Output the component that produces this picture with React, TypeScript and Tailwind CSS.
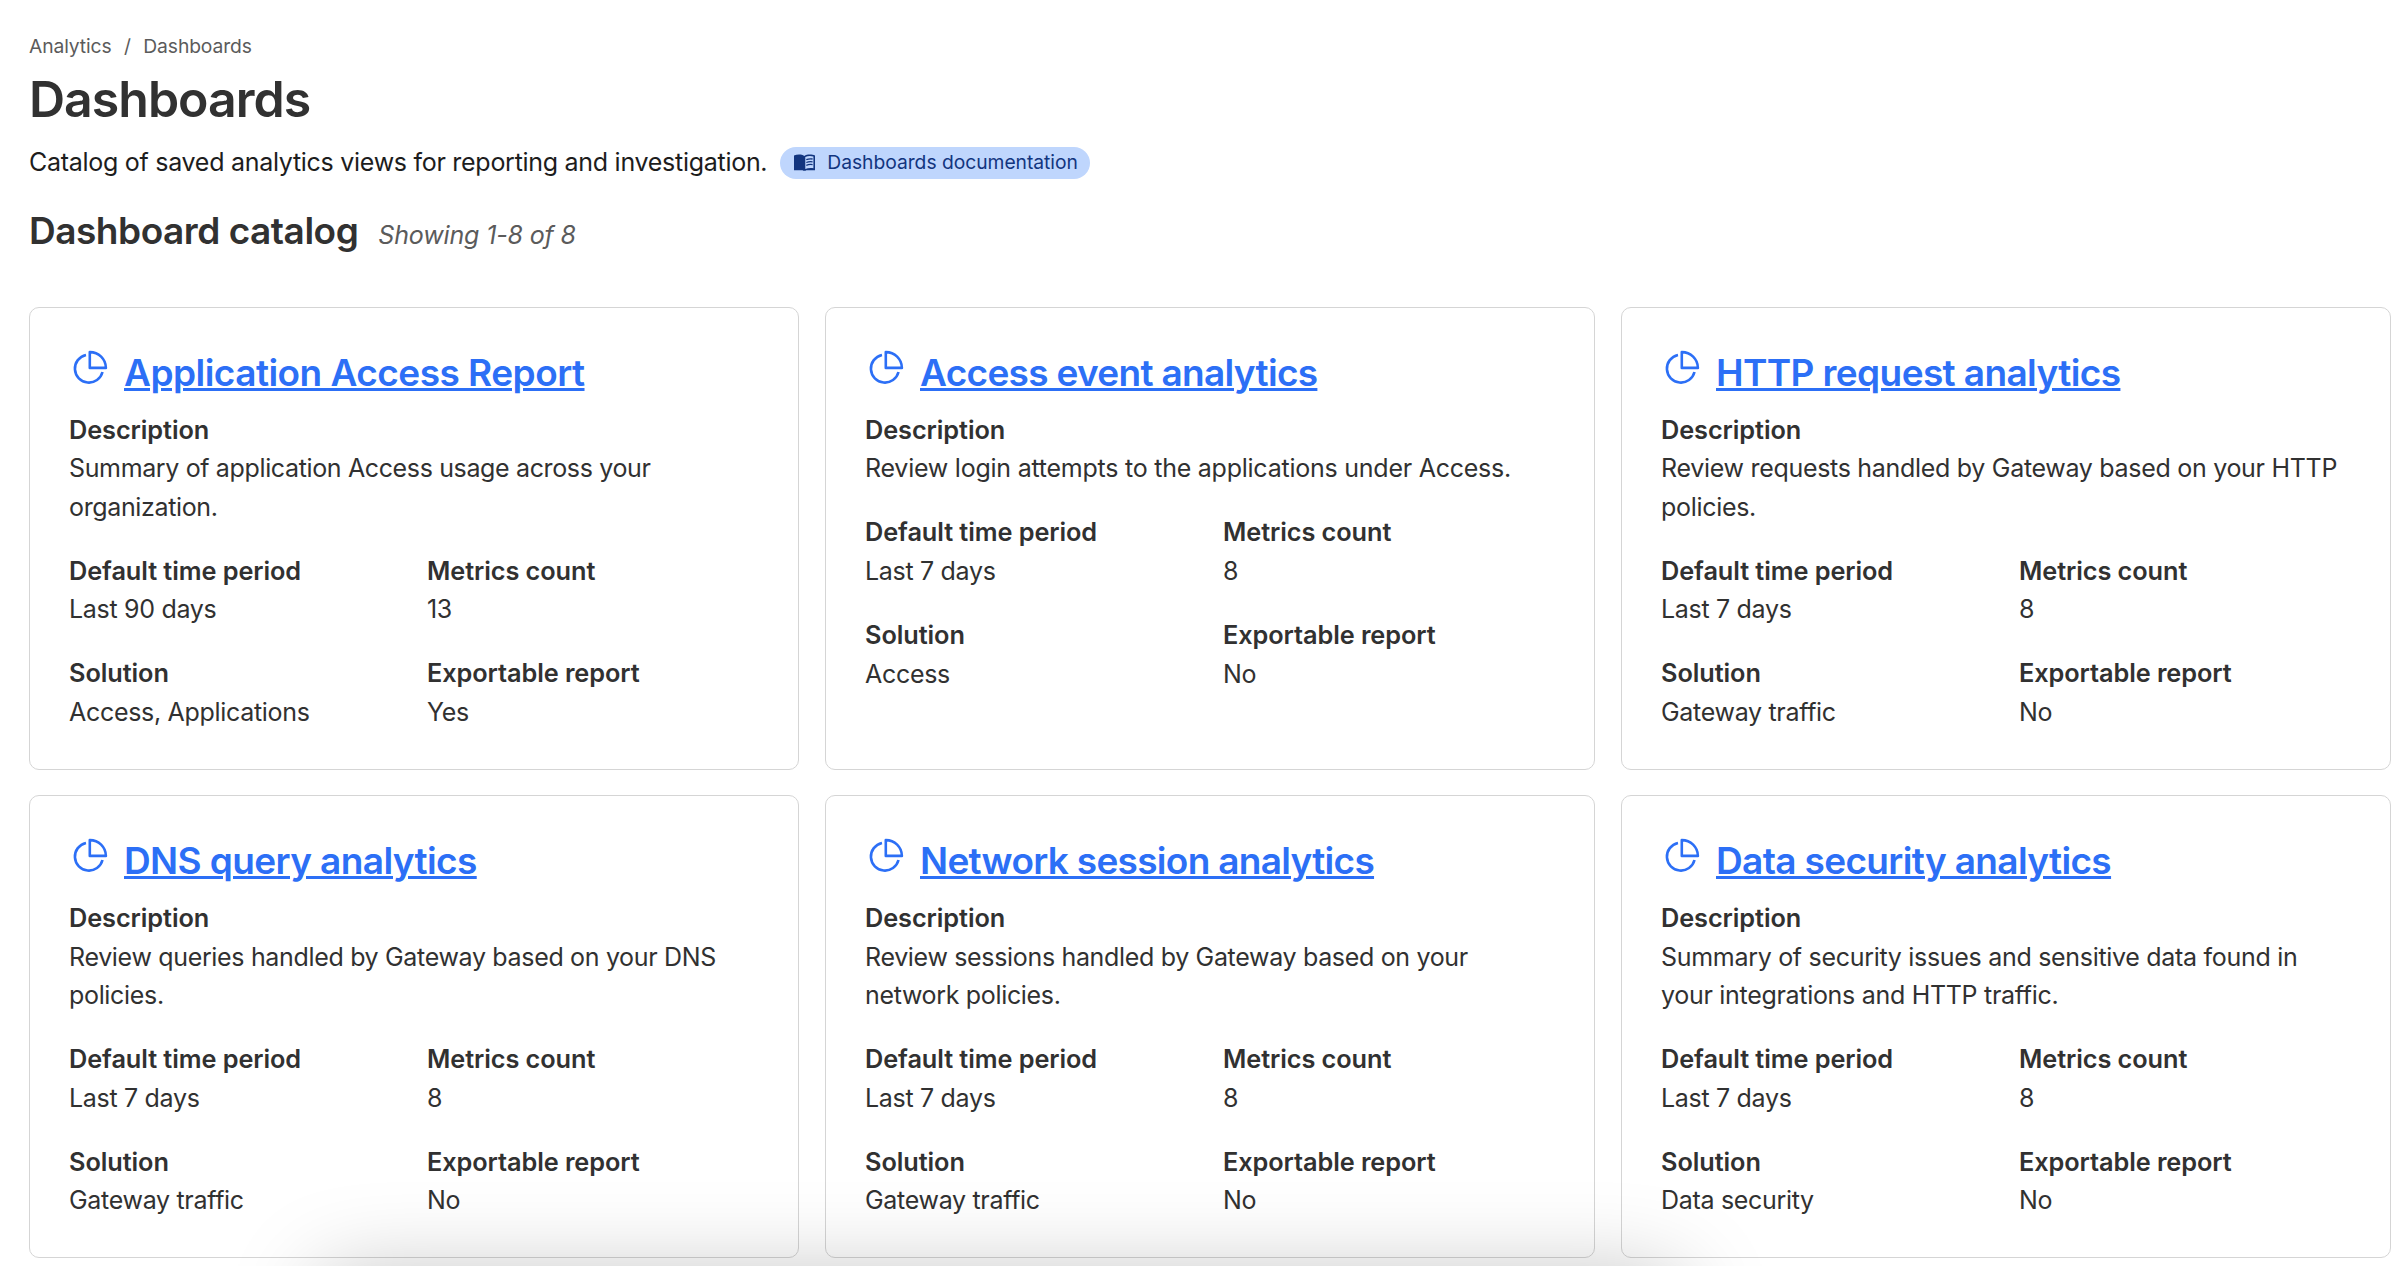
type Dashboard = {
  title: string;
  titleTracking: string;
  description: string[];
  textTracking: string;
  period: string;
  metrics: string;
  solution: string;
  exportable: string;
};

const dashboards: Dashboard[] = [
  { title: 'Application Access Report', titleTracking: 'tracking-[-0.53px]', description: ['Summary of application Access usage across your', 'organization.'], textTracking: 'tracking-[-0.36px]', period: 'Last 90 days', metrics: '13', solution: 'Access, Applications', exportable: 'Yes' },
  { title: 'Access event analytics', titleTracking: 'tracking-[-0.69px]', description: ['Review login attempts to the applications under Access.'], textTracking: 'tracking-[-0.24px]', period: 'Last 7 days', metrics: '8', solution: 'Access', exportable: 'No' },
  { title: 'HTTP request analytics', titleTracking: 'tracking-[-0.61px]', description: ['Review requests handled by Gateway based on your HTTP', 'policies.'], textTracking: 'tracking-[-0.3px]', period: 'Last 7 days', metrics: '8', solution: 'Gateway traffic', exportable: 'No' },
  { title: 'DNS query analytics', titleTracking: 'tracking-[-0.61px]', description: ['Review queries handled by Gateway based on your DNS', 'policies.'], textTracking: 'tracking-[-0.33px]', period: 'Last 7 days', metrics: '8', solution: 'Gateway traffic', exportable: 'No' },
  { title: 'Network session analytics', titleTracking: 'tracking-[-0.7px]', description: ['Review sessions handled by Gateway based on your', 'network policies.'], textTracking: 'tracking-[-0.33px]', period: 'Last 7 days', metrics: '8', solution: 'Gateway traffic', exportable: 'No' },
  { title: 'Data security analytics', titleTracking: 'tracking-[-0.65px]', description: ['Summary of security issues and sensitive data found in', 'your integrations and HTTP traffic.'], textTracking: 'tracking-[-0.3px]', period: 'Last 7 days', metrics: '8', solution: 'Data security', exportable: 'No' },
];

function PieIcon() {
  return (
    <svg className="h-[43px] w-[43px] shrink-0" viewBox="0 0 43 43" fill="none" stroke="#2c6ff6" strokeWidth="2.6">
      <path d="M17 8.9A14 14 0 1 0 33.5 26" />
      <path d="M20.8 6.1V21.9H36.9A16 16 0 0 0 20.8 6.1Z" strokeLinejoin="round" />
    </svg>
  );
}

function BookIcon() {
  return (
    <svg className="h-[17px] w-[21px] shrink-0" viewBox="0 0 21 17">
      <path fill="#12357f" d="M0 1.6C3 .2 7.6 .2 10.3 1.9C13 .2 18 .2 21 1.6V16.2H12.3C11.6 17 9.2 17 8.6 16.2H0Z" />
      <path fill="#bfd6fd" d="M11.3 3C13.6 1.9 17 1.8 19.4 2.6V14.2C16.8 13.7 13.6 13.9 11.3 15Z" />
      <path stroke="#12357f" strokeWidth="1.3" fill="none" d="M12.3 5.7C14.2 4.9 16.6 4.7 18.6 5M12.3 8.5C14.2 7.7 16.6 7.5 18.6 7.8M12.3 11.3C14.2 10.5 16.6 10.3 18.6 10.6" />
    </svg>
  );
}

function Field({ label, lines, tracking = 'tracking-[-0.31px]' }: { label: string; lines: string[]; tracking?: string }) {
  return (
    <div className="min-w-0 text-[#313131]">
      <dt className="text-[25.3px] leading-[38.8px] font-semibold tracking-[-0.07px]">{label}</dt>
      {lines.map((line) => (
        <dd key={line} className={`text-[25px] leading-[38.5px] whitespace-nowrap ${tracking}`}>{line}</dd>
      ))}
    </div>
  );
}

function Card({ item }: { item: Dashboard }) {
  return (
    <article className="h-[462.7px] rounded-[10px] border border-[#d5d5d5] px-[39px] pt-[40.5px]">
      <div className="mb-[14px] flex h-12 items-start gap-3">
        <div className="-mt-[2.5px]">
          <PieIcon />
        </div>
        <h3 className={`text-[37px] leading-[48px] font-semibold whitespace-nowrap ${item.titleTracking}`}>
          <a className="text-[#2c6ff6] underline decoration-[3px] underline-offset-[2px]">{item.title}</a>
        </h3>
      </div>
      <dl className="grid grid-cols-2 gap-x-[26px] gap-y-[25.4px]">
        <div className="col-span-2">
          <Field label="Description" lines={item.description} tracking={item.textTracking} />
        </div>
        <Field label="Default time period" lines={[item.period]} />
        <Field label="Metrics count" lines={[item.metrics]} />
        <Field label="Solution" lines={[item.solution]} />
        <Field label="Exportable report" lines={[item.exportable]} />
      </dl>
    </article>
  );
}

export default function App() {
  return (
    <div className="relative h-[1266px] w-[2404px] overflow-hidden bg-white pt-[31px] pl-[29px] font-['Inter',sans-serif]">
      <nav className="flex h-[30px] text-[19.3px] leading-[30px] tracking-[-0.12px] text-[#5b5b5b]">
        <span>Analytics</span>
        <span className="mx-[12.5px]">/</span>
        <span>Dashboards</span>
      </nav>
      <h1 className="mt-2 h-[60px] text-[50px] leading-[60px] font-semibold tracking-[-1px] text-[#313131]">Dashboards</h1>
      <div className="mt-[14px] flex h-[39px] items-center">
        <p className="text-[25px] leading-[39px] tracking-[-0.28px] text-[#1d1d1d]">Catalog of saved analytics views for reporting and investigation.</p>
        <a className="ml-[13px] flex h-8 w-[310px] items-center gap-3 rounded-full bg-[#bfd6fd] pl-[14px] text-[19.3px] leading-8 text-[#12357f]">
          <BookIcon />
          <span className="-mt-px tracking-[-0.04px] whitespace-nowrap">Dashboards documentation</span>
        </a>
      </div>
      <div className="mt-[24.5px] flex h-12 items-baseline gap-5">
        <h2 className="text-[37px] leading-[48px] font-semibold tracking-[-0.48px] text-[#313131]">Dashboard catalog</h2>
        <span className="text-[25px] leading-[38.5px] tracking-[-0.15px] text-[#5b5b5b] italic">Showing 1-8 of 8</span>
      </div>
      <main className="mt-[52.5px] grid w-[2362px] grid-cols-3 gap-x-[26px] gap-y-[25.6px]">
        {dashboards.map((item) => (
          <Card key={item.title} item={item} />
        ))}
      </main>
      <div className="pointer-events-none absolute top-[1276px] left-[320px] h-[200px] w-[1360px] rounded-[20px] shadow-[0_0_90px_rgba(0,0,0,0.25)]" />
    </div>
  );
}
